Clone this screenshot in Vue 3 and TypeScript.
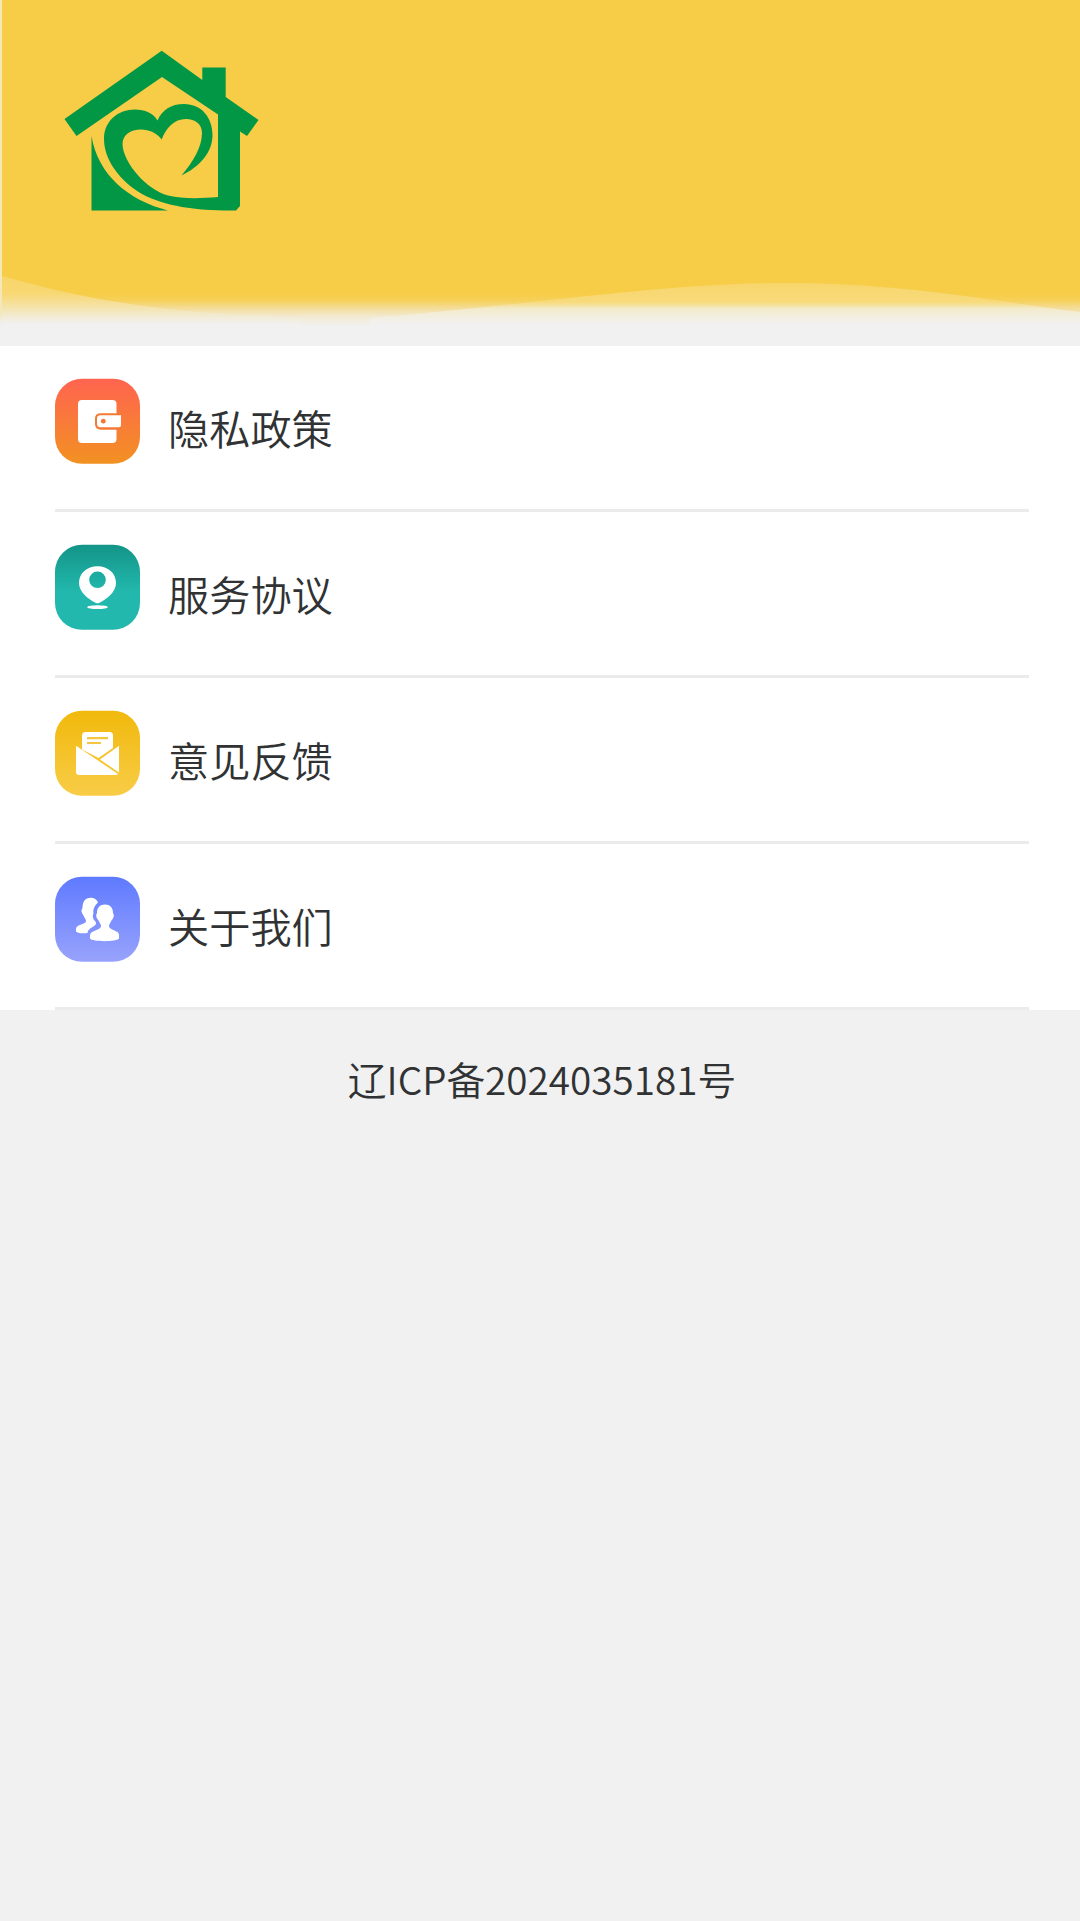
<script setup lang="ts">
interface MenuItem {
  id: 'wallet' | 'pin' | 'mail' | 'people'
  label: string
  from: string
  to: string
}

const items: MenuItem[] = [
  { id: 'wallet', label: '隐私政策', from: '#ff6450', to: '#f29122' },
  { id: 'pin', label: '服务协议', from: '#149488', to: '#22b8ad' },
  { id: 'mail', label: '意见反馈', from: '#f1b90c', to: '#f8cc47' },
  { id: 'people', label: '关于我们', from: '#5f7aff', to: '#98a3fc' },
]
</script>

<template>
  <main class="page">
    <header class="banner">
      <svg class="wave" viewBox="0 0 1080 345" preserveAspectRatio="none" aria-hidden="true">
        <defs>
          <linearGradient id="base" gradientUnits="userSpaceOnUse" x1="0" y1="294" x2="0" y2="326">
            <stop offset="0" stop-color="#f7cd47" />
            <stop offset=".2" stop-color="#f6d05a" />
            <stop offset=".45" stop-color="#f4dd9a" />
            <stop offset=".7" stop-color="#f2e9d0" />
            <stop offset="1" stop-color="#f1f1f1" />
          </linearGradient>
          <linearGradient id="crest-left" gradientUnits="userSpaceOnUse" x1="0" y1="275" x2="0" y2="325">
            <stop offset="0" stop-color="#f8d56a" />
            <stop offset=".36" stop-color="#f8d872" />
            <stop offset=".62" stop-color="#f5e2a4" />
            <stop offset=".82" stop-color="#f2ebd3" />
            <stop offset="1" stop-color="#f1f1f1" />
          </linearGradient>
          <linearGradient id="crest-right" gradientUnits="userSpaceOnUse" x1="0" y1="283" x2="0" y2="324">
            <stop offset="0" stop-color="#f8d66c" />
            <stop offset=".46" stop-color="#f8da7a" />
            <stop offset=".64" stop-color="#f3ebcd" />
            <stop offset="1" stop-color="#f1f1f1" />
          </linearGradient>
        </defs>
        <rect width="1080" height="345" fill="url(#base)" />
        <path d="M2 276 C70 295 130 308 240 315 L300 318 V330 H2Z" fill="url(#crest-left)" />
        <path d="M370 318 C540 304 660 283 785 283 C900 283 980 299 1080 312 V330 H370Z" fill="url(#crest-right)" />
        <rect width="2" height="316" fill="#f5e8b8" />
      </svg>
      <svg class="logo" viewBox="50 40 220 180" fill="#029744" aria-hidden="true">
        <path d="M161.700 50.700 L202.300 80 V67.500 H225.700 V97 L258.500 120 L247 136 L240 131.500 V206 L236 210.500 C200 211 166 207 142 194 C120 181 104 160 104 139 C104 121 118 109.500 135 109.500 C145 109.500 153 113 157.500 120.500 C162 110 171 104 184 104 C202 104 212.500 118 212.500 135 C212.500 153 199 167 181.500 175.500 C193 162 202 147 202 133 C202 124 195 119 186 119 C174 119 166 128 161.700 139.500 C157 133 149 129.500 141 129.500 C130 129.500 122.500 135 122.500 144 C123 163 147 190 168 195.500 C183 199 200 198.500 218 197 V114.500 L162 77 L76.500 136 L64.500 119Z" />
        <path d="M91.500 136 C98 175 128 200 168 210.500 H91.500Z" />
      </svg>
    </header>

    <nav class="menu">
      <a v-for="item in items" :key="item.id" class="row">
        <svg class="icon" viewBox="0 0 85 85" aria-hidden="true">
          <defs>
            <linearGradient :id="item.id" x1="0" y1="0" x2="0" y2="1">
              <stop offset="0" :stop-color="item.from" />
              <stop :offset="item.id === 'pin' ? 0.55 : 1" :stop-color="item.to" />
            </linearGradient>
          </defs>
          <rect y=".3" width="85" height="85" rx="27" :fill="`url(#${item.id})`" />
          <g v-if="item.id === 'wallet'">
            <rect x="23" y="21.500" width="38.500" height="43" rx="4" fill="#fff" />
            <path d="M66 34.700 H46 Q40 34.700 40 40 V45.500 Q40 51.200 46 51.200 H66Z" fill="#f47937" />
            <path d="M66 36.700 H45.500 Q42 36.700 42 40 V45.300 Q42 48.800 45.500 48.800 H64 Q66 48.800 66 46.800Z" fill="#fff" />
            <circle cx="48.300" cy="42.700" r="2.400" fill="#f47937" />
          </g>
          <g v-else-if="item.id === 'pin'" fill="#fff">
            <path fill-rule="evenodd" d="M42.500 21.700 C53 21.700 61 28.500 61 38.500 C61 47.500 52 54.500 44.500 58.300 Q42.500 59.300 40.500 58.300 C33 54.500 24 47.500 24 38.500 C24 28.500 32 21.700 42.500 21.700Z M42.500 27 A8.300 8.300 0 1 0 42.500 43.600 A8.300 8.300 0 1 0 42.500 27Z" />
            <ellipse cx="42.500" cy="62.700" rx="10.300" ry="1.900" />
          </g>
          <g v-else-if="item.id === 'mail'">
            <path d="M27 39 V25 Q27 21.500 30.500 21.500 H54.500 Q58 21.500 58 25 V37.500 L43.500 47.500Z" fill="#fff" />
            <path d="M32 27.700 H53 M32 32.500 H46" stroke="#f4c643" stroke-width="2.200" />
            <path d="M21 35.200 L63 63.500 Q62 64.500 60.500 64.500 H24 Q21 64.500 21 61.500Z M64 35.200 V62 L45 49Z" fill="#fff" />
          </g>
          <g v-else>
            <path d="M21 55 V52 C22 47.500 31 48 31 44.500 C31 43 29.500 41.500 28.500 39 C26 36 26 33.500 27.500 31.500 C27.500 24 31 21.200 36 21.200 C39 21.200 42 23 43 26 C38.500 30 38 34 38.500 37 C37 40 38.300 43 40.500 45 C43 51 34 49 32.500 56.500 C28 57 23 57 21 55Z" fill="#fff" />
            <path d="M35 62 V58.500 C36 53.500 46 54 46 49.500 C46 48 44.500 46 43.500 44 C41 41.500 40.500 38.500 42 36.500 C42 31 45 28 50 28 C55 28 58 31 58 36.500 C59.500 38.500 59 41.500 56.500 44 C55.500 46 54 48 54 49.500 C54 54 64 53.500 64 58.500 V62 C62 65.500 37 65.500 35 62Z" fill="#fff" />
          </g>
        </svg>
        <span class="label">{{ item.label }}</span>
      </a>
    </nav>

    <footer class="record">辽ICP备2024035181号</footer>
  </main>
</template>

<style>
body {
  background: #f1f1f1;
}
</style>

<style scoped>
.page {
  width: 1080px;
  min-height: 1921px;
  background: #f1f1f1;
  color: #303233;
  font-family: "Noto Sans CJK SC", sans-serif;
  font-weight: 350;
}
.banner {
  position: relative;
  height: 345.600px;
  padding: 40px 50px;
  box-sizing: border-box;
}
.wave {
  position: absolute;
  inset: 0;
  width: 1080px;
  height: 345px;
}
.logo {
  position: relative;
  display: block;
  width: 220px;
  height: 180px;
}
.menu {
  background: #fff;
}
.row {
  display: flex;
  align-items: flex-start;
  height: 166px;
  margin: 0 51px 0 55px;
  padding-top: 32.800px;
  box-sizing: border-box;
  border-bottom: 3px solid #ebebeb;
}
.icon {
  flex: none;
  width: 85px;
  height: 86px;
  overflow: visible;
}
.label {
  margin: 19px 0 0 28px;
  font-size: 41.200px;
  line-height: 60px;
}
.record {
  padding: 38px 0 0 4px;
  text-align: center;
  font-size: 38.700px;
  line-height: 60px;
}
</style>
